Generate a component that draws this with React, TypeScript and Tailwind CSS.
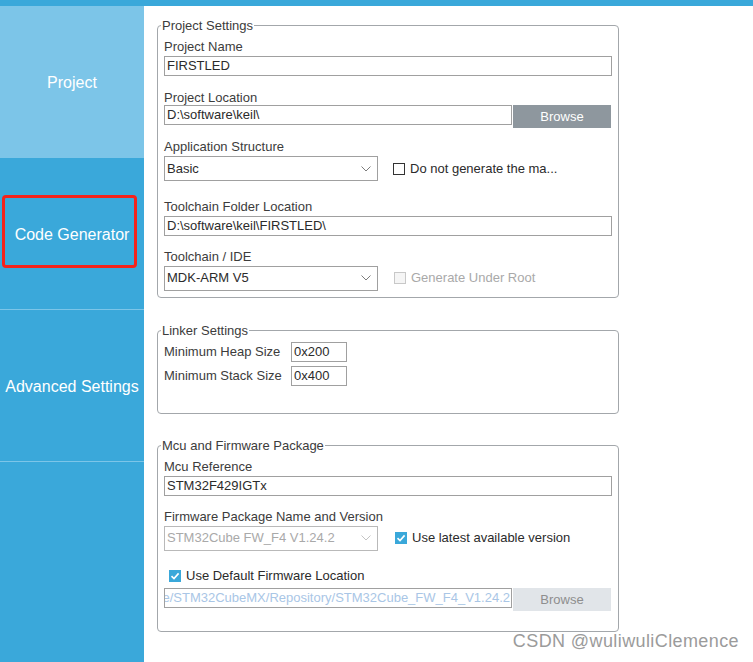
import type { ReactNode } from "react";

function Group({ title, className, children }: { title: string; className?: string; children: ReactNode }) {
  return (
    <fieldset className={`w-[462px] rounded-[4px] border border-[#a3a7ab] px-[6px] ${className ?? ""}`}>
      <legend className="ml-[-3px] px-[1px] text-[13px] leading-[15px] text-[#3c3c3c]">{title}</legend>
      {children}
    </fieldset>
  );
}

function Label({ children }: { children: ReactNode }) {
  return <div className="text-[13px] leading-[15px] text-[#3c3c3c]">{children}</div>;
}

function TextBox({ value, className }: { value: string; className?: string }) {
  return (
    <div
      className={`h-[20px] overflow-hidden whitespace-nowrap border border-[#a0a0a0] pl-[2px] text-[13px] leading-[18px] text-[#2b2b2b] ${className ?? ""}`}
    >
      {value}
    </div>
  );
}

function Chevron({ color }: { color: string }) {
  return (
    <svg width="10" height="6" viewBox="0 0 10 6">
      <path d="M0.5 0.5 L5 5 L9.5 0.5" stroke={color} fill="none" strokeWidth="1" />
    </svg>
  );
}

function Select({ value, disabled }: { value: string; disabled?: boolean }) {
  return (
    <div
      className={`flex h-[25px] w-[214px] shrink-0 items-center justify-between border pl-[2px] pr-[6px] text-[13px] ${
        disabled ? "border-[#b9b9b9] text-[#a9a9a9]" : "border-[#a0a0a0] text-[#2b2b2b]"
      }`}
    >
      <span>{value}</span>
      <Chevron color={disabled ? "#c4c4c4" : "#7c7c7c"} />
    </div>
  );
}

function Check({ state, className }: { state: "off" | "on" | "disabled"; className?: string }) {
  if (state === "on") {
    return (
      <span className={`flex h-[12px] w-[12px] shrink-0 items-center justify-center bg-[#3aa8da] ${className ?? ""}`}>
        <svg width="12" height="12" viewBox="0 0 12 12">
          <path d="M2.5 6.2 L5 8.6 L9.6 3.4" stroke="#ffffff" strokeWidth="1.6" fill="none" />
        </svg>
      </span>
    );
  }
  return (
    <span
      className={`block h-[12px] w-[12px] shrink-0 border ${
        state === "disabled" ? "border-[#c8c8c8] bg-[#f5f5f5]" : "border-[#333333] bg-white"
      } ${className ?? ""}`}
    />
  );
}

function Browse({ disabled }: { disabled?: boolean }) {
  return (
    <div
      className={`ml-[1px] flex h-[23px] w-[98px] items-center justify-center text-[13px] ${
        disabled ? "bg-[#e1e5e9] text-[#8e8e8e]" : "bg-[#8e979e] text-white"
      }`}
    >
      Browse
    </div>
  );
}

function Tab({ label, active, children }: { label: string; active?: boolean; children?: ReactNode }) {
  return (
    <div
      className={`relative flex h-[152px] items-center justify-center border-b border-[#7cc5e8] pt-[2px] text-[16px] text-white ${
        active ? "bg-[#7cc5e8]" : "bg-[#3aa8da]"
      }`}
    >
      {label}
      {children}
    </div>
  );
}

export default function App() {
  return (
    <div className="relative flex h-[662px] w-[753px] flex-col overflow-hidden bg-white font-['Liberation_Sans',Arial,sans-serif]">
      <div className="h-[6px] shrink-0 bg-[#3aa8da]" />

      <div className="flex flex-1">
        {/* Left navigation */}
        <aside className="flex w-[144px] shrink-0 flex-col bg-[#3aa8da]">
          <Tab label="Project" active />
          <Tab label="Code Generator">
            <div className="absolute left-[2px] top-[37px] h-[73px] w-[135px] rounded-[4px] border-[3px] border-[#f5221b]" />
          </Tab>
          <Tab label="Advanced Settings" />
        </aside>

        {/* Settings */}
        <main className="flex-1 pl-[13px] pt-[12px]">
          <Group title="Project Settings" className="pb-[7px]">
            <div className="mt-[6px]">
              <Label>Project Name</Label>
              <TextBox value="FIRSTLED" className="mt-[2px]" />
            </div>
            <div className="mt-[14px]">
              <Label>Project Location</Label>
              <div className="flex items-start">
                <TextBox value="D:\software\keil\" className="w-[348px]" />
                <Browse />
              </div>
            </div>
            <div className="mt-[11px]">
              <Label>Application Structure</Label>
              <div className="mt-[2px] flex items-center">
                <Select value="Basic" />
                <Check state="off" className="ml-[15px]" />
                <span className="ml-[5px] text-[13px] text-[#2b2b2b]">Do not generate the ma...</span>
              </div>
            </div>
            <div className="mt-[18px]">
              <Label>Toolchain Folder Location</Label>
              <TextBox value="D:\software\keil\FIRSTLED\" className="mt-[2px]" />
            </div>
            <div className="mt-[13px]">
              <Label>Toolchain / IDE</Label>
              <div className="mt-[2px] flex h-[24px] items-center">
                <Select value="MDK-ARM V5" />
                <Check state="disabled" className="ml-[16px]" />
                <span className="ml-[5px] text-[13px] text-[#a9a9a9]">Generate Under Root</span>
              </div>
            </div>
          </Group>

          <Group title="Linker Settings" className="mt-[25px] pb-[27px]">
            <div className="mt-[4px] flex items-center">
              <span className="w-[127px] text-[13px] text-[#3c3c3c]">Minimum Heap Size</span>
              <TextBox value="0x200" className="w-[56px]" />
            </div>
            <div className="mt-[4px] flex items-center">
              <span className="w-[127px] text-[13px] text-[#3c3c3c]">Minimum Stack Size</span>
              <TextBox value="0x400" className="w-[56px]" />
            </div>
          </Group>

          <Group title="Mcu and Firmware Package" className="mt-[24px] pb-[20px]">
            <div className="mt-[6px]">
              <Label>Mcu Reference</Label>
              <TextBox value="STM32F429IGTx" className="mt-[2px]" />
            </div>
            <div className="mt-[13px]">
              <Label>Firmware Package Name and Version</Label>
              <div className="mt-[2px] flex h-[24px] items-center">
                <Select value="STM32Cube FW_F4 V1.24.2" disabled />
                <Check state="on" className="ml-[17px]" />
                <span className="ml-[5px] text-[13px] text-[#2b2b2b]">Use latest available version</span>
              </div>
            </div>
            <div className="mt-[18px] flex h-[15px] items-center pl-[5px]">
              <Check state="on" />
              <span className="ml-[5px] text-[13px] text-[#2b2b2b]">Use Default Firmware Location</span>
            </div>
            <div className="mt-[5px] flex items-start">
              <div className="flex h-[20px] w-[348px] justify-end overflow-hidden whitespace-nowrap border border-[#a0a0a0] pr-[1px] text-[13px] leading-[18px] text-[#a9c6e6]">
                D:/software/STM32CubeMX/Repository/STM32Cube_FW_F4_V1.24.2
              </div>
              <Browse disabled />
            </div>
          </Group>
        </main>
      </div>

      <div className="absolute bottom-[10px] right-[14px] text-[18px] leading-[22px] tracking-[0.4px] text-[#9b9b9b]">
        CSDN @wuliwuliClemence
      </div>
    </div>
  );
}
